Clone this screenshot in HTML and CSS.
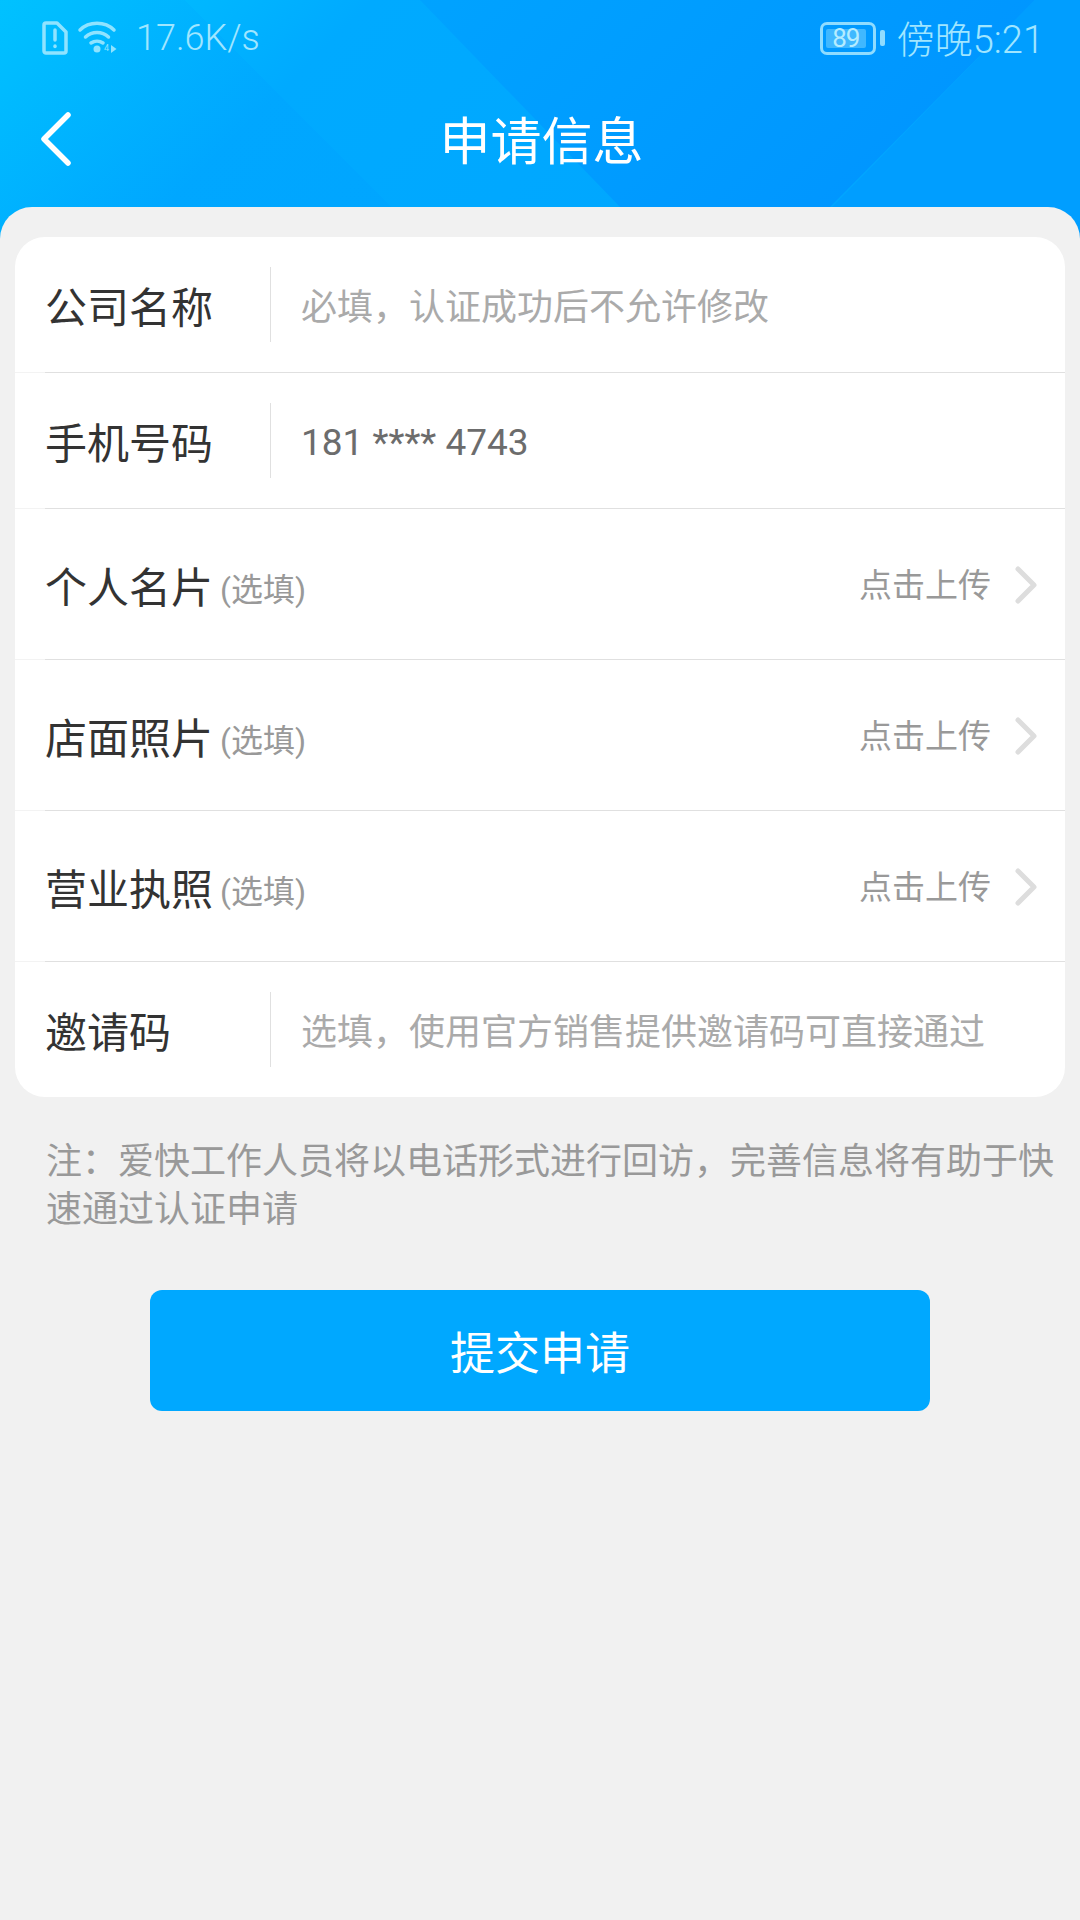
FILE: index.html
```html
<!DOCTYPE html>
<html lang="zh-CN">
<head>
    <meta charset="UTF-8">
    <meta name="viewport" content="width=device-width, initial-scale=1.0">
    <title>申请信息</title>
    <link rel="stylesheet" href="styles.css">
</head>
<body>
    <div class="top">
        <div class="status-bar">
            <div class="status-left">
                <svg class="sim-icon" viewBox="0 0 26 34">
                    <path d="M4 2h11l9 9v19a2 2 0 0 1-2 2h-18a2 2 0 0 1-2-2v-26a2 2 0 0 1 2-2z"/>
                    <line x1="13" y1="9" x2="13" y2="19"/>
                    <line x1="13" y1="25" x2="13" y2="25.500"/>
                </svg>
                <svg class="wifi-icon" viewBox="0 0 40 32">
                    <path d="M2 8C11 -1 27 -1 36 8"/>
                    <path d="M7.500 15C14 9 24 9 30.500 15"/>
                    <path d="M13 21C16.500 18.500 21.500 18.500 25 21"/>
                    <circle class="fill" cx="19" cy="27" r="3.500"/>
                    <text class="wifi-4g" x="26" y="29">4</text>
                    <polygon class="fill" points="33,23 33,31 38.500,27"/>
                </svg>
                <span class="net-speed">17.6K/s</span>
            </div>
            <div class="status-right">
                <div class="battery">
                    <div class="battery-body"><span class="battery-level">89</span></div>
                    <div class="battery-cap"></div>
                </div>
                <span class="clock">傍晚5:21</span>
            </div>
        </div>
        <div class="nav-bar">
            <svg class="back-icon" viewBox="0 0 32 56">
                <polyline points="28,4 4,28 28,52"/>
            </svg>
            <h1 class="nav-title">申请信息</h1>
        </div>
    </div>

    <div class="sheet">
        <div class="form-card">
            <div class="row">
                <div class="row-body">
                    <span class="row-label">公司名称</span>
                    <span class="row-sep"></span>
                    <span class="row-hint">必填，认证成功后不允许修改</span>
                </div>
            </div>
            <div class="row">
                <div class="row-body">
                    <span class="row-label">手机号码</span>
                    <span class="row-sep"></span>
                    <span class="row-value">181 **** 4743</span>
                </div>
            </div>
            <div class="row row-upload">
                <div class="row-body">
                    <span class="upload-label">个人名片</span>
                    <span class="optional">(选填)</span>
                    <span class="upload-action">点击上传</span>
                    <svg class="row-arrow" viewBox="0 0 22 38"><polyline points="3,3 19,19 3,35"/></svg>
                </div>
            </div>
            <div class="row row-upload">
                <div class="row-body">
                    <span class="upload-label">店面照片</span>
                    <span class="optional">(选填)</span>
                    <span class="upload-action">点击上传</span>
                    <svg class="row-arrow" viewBox="0 0 22 38"><polyline points="3,3 19,19 3,35"/></svg>
                </div>
            </div>
            <div class="row row-upload">
                <div class="row-body">
                    <span class="upload-label">营业执照</span>
                    <span class="optional">(选填)</span>
                    <span class="upload-action">点击上传</span>
                    <svg class="row-arrow" viewBox="0 0 22 38"><polyline points="3,3 19,19 3,35"/></svg>
                </div>
            </div>
            <div class="row row-last">
                <div class="row-body">
                    <span class="row-label">邀请码</span>
                    <span class="row-sep"></span>
                    <span class="row-hint">选填，使用官方销售提供邀请码可直接通过</span>
                </div>
            </div>
        </div>

        <p class="note">注：爱快工作人员将以电话形式进行回访，完善信息将有助于快速通过认证申请</p>

        <button class="submit-btn">提交申请</button>
    </div>
</body>
</html>
```

FILE: styles.css
```css
* {
    margin: 0;
    padding: 0;
    box-sizing: border-box;
}

body {
    font-family: Roboto, 'Noto Sans CJK SC', sans-serif;
    background: #f1f1f1;
    color: #333;
    width: 1080px;
    height: 1920px;
    overflow: hidden;
}

/* 顶部渐变区 */
.top {
    height: 250px;
    margin-bottom: -43px;
    position: relative;
    background:
        linear-gradient(225deg, transparent 633px, rgba(0, 90, 255, 0.04) 633px),
        linear-gradient(135deg, #00c6ff 0%, #00aaff 28%, #00a4ff 100%);
    overflow: hidden;
}

.top::before {
    content: '';
    position: absolute;
    inset: 0;
    background: linear-gradient(135deg, #00a3ff 30%, #0096ff 80%);
    clip-path: polygon(420px 0, 1035px 0, 830px 207px, 620px 207px);
}

.top::after {
    content: '';
    position: absolute;
    inset: 0;
    background: #009eff;
    clip-path: polygon(1035px 0, 1080px 0, 1080px 250px, 790px 250px);
}

.status-bar {
    height: 76px;
    padding: 0 36px 0 42px;
    display: flex;
    justify-content: space-between;
    align-items: center;
    position: relative;
    z-index: 1;
    color: #a0e6ff;
}

.status-left,
.status-right {
    display: flex;
    align-items: center;
}

.sim-icon {
    width: 26px;
    height: 34px;
    fill: none;
    stroke: #8fe3ff;
    stroke-width: 3.500;
    stroke-linecap: round;
    stroke-linejoin: round;
}

.wifi-icon {
    width: 40px;
    height: 32px;
    margin-left: 10px;
    overflow: visible;
    fill: none;
    stroke: #8fe3ff;
    stroke-width: 3.500;
    stroke-linecap: round;
}

.wifi-icon .fill {
    fill: #8fe3ff;
    stroke: none;
}

.wifi-4g {
    font-size: 9px;
    fill: #8fe3ff;
    stroke: none;
}

.net-speed {
    margin-left: 18px;
    font-size: 36px;
    font-weight: 300;
}

.battery {
    display: flex;
    align-items: center;
    gap: 4px;
}

.battery-body {
    width: 56px;
    height: 33px;
    border: 3px solid #8fdcff;
    border-radius: 7px;
    padding: 4px 3px;
}

.battery-level {
    display: block;
    width: 40px;
    height: 19px;
    background: #40b8ff;
    border-radius: 2px;
    color: #b5ecff;
    font-size: 26px;
    letter-spacing: -1px;
    line-height: 19px;
    text-align: center;
}

.battery-cap {
    width: 5px;
    height: 16px;
    background: #8fdcff;
    border-radius: 2px;
}

.clock {
    margin-left: 12px;
    padding-bottom: 4px;
    font-size: 38px;
    font-weight: 300;
}

.nav-bar {
    height: 124px;
    display: flex;
    align-items: center;
    justify-content: center;
    position: relative;
    z-index: 1;
}

.back-icon {
    position: absolute;
    left: 40px;
    top: 35px;
    width: 32px;
    height: 56px;
    fill: none;
    stroke: #fff;
    stroke-width: 5.500;
    stroke-linecap: round;
    stroke-linejoin: round;
}

.nav-title {
    font-size: 51px;
    font-weight: 400;
    color: #fff;
    margin-left: 3px;
}

/* 表单 */
.sheet {
    position: relative;
    background: #f1f1f1;
    border-radius: 32px 32px 0 0;
    padding: 30px 15px 0;
}

.form-card {
    background: #fff;
    border-radius: 30px;
    overflow: hidden;
}

.row {
    height: 136px;
    padding-left: 30px;
    border-bottom: 1px solid #f3f3f3;
}

.row-upload {
    height: 151px;
}

.row-last {
    height: 135px;
    border-bottom: 0;
}

.row-body {
    height: 136px;
    margin-bottom: -1px;
    padding-right: 28px;
    display: flex;
    align-items: center;
    border-bottom: 1px solid #e0e0e0;
}

.row-upload .row-body {
    height: 151px;
}

.row-last .row-body {
    height: 135px;
    border-bottom: 0;
}

.row-label {
    width: 225px;
    font-size: 42px;
    color: #333;
}

.row-sep {
    width: 1px;
    height: 75px;
    background: #e0e0e0;
    margin-right: 30px;
}

.row-hint {
    padding-bottom: 2px;
    font-size: 36px;
    color: #aaa;
}

.row-value {
    padding-top: 3px;
    font-size: 37px;
    color: #6c6c6c;
}

.upload-label {
    font-size: 42px;
    color: #333;
}

.optional {
    margin-left: 7px;
    padding-top: 5px;
    font-size: 32px;
    color: #999;
}

.upload-action {
    margin-left: auto;
    padding-bottom: 2px;
    font-size: 33px;
    color: #999;
}

.row-arrow {
    width: 22px;
    height: 38px;
    margin-left: 24px;
    margin-top: 2px;
    fill: none;
    stroke: #ddd;
    stroke-width: 5;
    stroke-linecap: round;
    stroke-linejoin: round;
}

.note {
    margin-top: 41px;
    padding: 0 5px 0 31px;
    font-size: 36px;
    line-height: 48px;
    color: #999;
}

.submit-btn {
    display: block;
    width: 780px;
    height: 121px;
    margin: 56px auto 0;
    border: 0;
    border-radius: 12px;
    background: #00a8ff;
    color: #fff;
    font-family: inherit;
    font-size: 45px;
}
```
